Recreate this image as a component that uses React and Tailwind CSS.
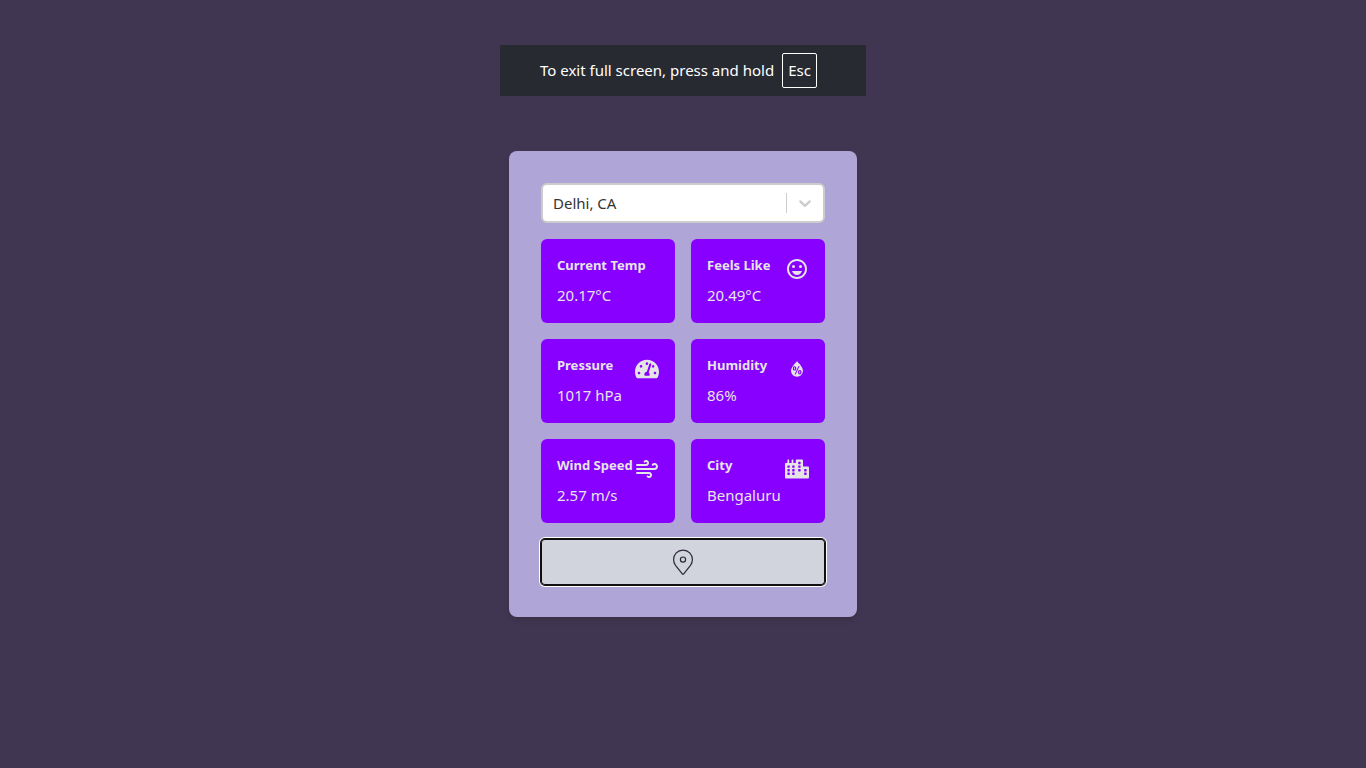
import { useState } from "react";
import { MdOutlineEmojiEmotions } from "react-icons/md";
import { FaTachometerAlt, FaCity } from "react-icons/fa";
import { WiHumidity } from "react-icons/wi";
import { FiWind } from "react-icons/fi";

const stats = [
  { title: "Current Temp", value: "20.17°C" },
  { title: "Feels Like", value: "20.49°C", icon: MdOutlineEmojiEmotions },
  { title: "Pressure", value: "1017 hPa", icon: FaTachometerAlt },
  { title: "Humidity", value: "86%", icon: WiHumidity },
  { title: "Wind Speed", value: "2.57 m/s", icon: FiWind },
  { title: "City", value: "Bengaluru", icon: FaCity },
];

function StatCard({ title, value, icon: Icon }) {
  return (
    <div className="flex items-start justify-between rounded-md bg-[#8800ff] p-4 text-[#e5e5e5]">
      <div className="whitespace-nowrap">
        <h3 className="mb-2 text-[13px] leading-5 font-bold">{title}</h3>
        <p className="text-[15px] leading-6">{value}</p>
      </div>
      {Icon && <Icon className="mt-0.5 -ml-6 size-6 shrink-0" />}
    </div>
  );
}

function CitySelect() {
  const [city, setCity] = useState("Delhi, CA");

  return (
    <div className="relative">
      <label htmlFor="city" className="sr-only">City</label>
      <select
        id="city"
        value={city}
        onChange={(e) => setCity(e.target.value)}
        className="block h-10 w-full appearance-none rounded-md border-2 border-[#cccccc] bg-white px-2.5 text-[15px] leading-6 text-[#333333]"
      >
        <option>Delhi, CA</option>
      </select>
      {/* separator + arrow */}
      <div className="pointer-events-none absolute inset-y-2.5 right-2.5 flex items-center gap-2 text-[#cccccc]">
        <span className="h-full w-px bg-[#cccccc]" />
        <svg viewBox="0 0 20 20" className="size-5" fill="currentColor">
          <path d="M4.516 7.548c0.436-0.446 1.043-0.481 1.576 0l3.908 3.747 3.908-3.747c0.533-0.481 1.141-0.446 1.574 0 0.436 0.445 0.408 1.197 0 1.615-0.406 0.418-4.695 4.502-4.695 4.502-0.217 0.223-0.502 0.335-0.787 0.335s-0.57-0.112-0.789-0.335c0 0-4.287-4.084-4.695-4.502s-0.436-1.17 0-1.615z" />
        </svg>
      </div>
    </div>
  );
}

function PinIcon() {
  return (
    <svg viewBox="0 0 26 26" className="size-[26px]" fill="none" stroke="currentColor" strokeWidth="1.2">
      <path d="M13 25.2C12.6 25.2 12.4 25 12.1 24.6L5.5 16.4C4.2 14.7 3.6 12.8 3.6 10.6C3.6 5.2 7.6 1.2 13 1.2S22.4 5.2 22.4 10.6C22.4 12.8 21.8 14.7 20.5 16.4L13.9 24.6C13.6 25 13.4 25.2 13 25.2Z" />
      <circle cx="13" cy="10.6" r="2.6" />
    </svg>
  );
}

export default function App() {
  return (
    <div className="flex min-h-screen items-center justify-center bg-[#413651] font-['Noto_Sans',sans-serif]">
      <div className="fixed inset-x-0 top-[45px] flex justify-center">
        <div className="flex h-[51px] w-[366px] items-center gap-2 bg-[#282a32] px-10 text-[15px] whitespace-nowrap text-white">
          <span>To exit full screen, press and hold</span>
          <kbd className="flex size-[35px] shrink-0 items-center justify-center rounded-xs border border-white font-[inherit]">
            Esc
          </kbd>
        </div>
      </div>

      <main className="flex w-full max-w-[348px] flex-col gap-4 rounded-lg bg-[#afa5d6] p-8 shadow-md">
        <CitySelect />
        <div className="grid grid-cols-2 gap-4">
          {stats.map((stat) => (
            <StatCard key={stat.title} {...stat} />
          ))}
        </div>
        <button
          aria-label="Use my location"
          className="flex h-[46px] items-center justify-center rounded-sm bg-[#d1d4dc] text-[#2c2438] shadow-[0_0_0_1px_#101010,0_0_0_2px_#ffffff,inset_0_0_0_1px_#101010]"
        >
          <PinIcon />
        </button>
      </main>
    </div>
  );
}
